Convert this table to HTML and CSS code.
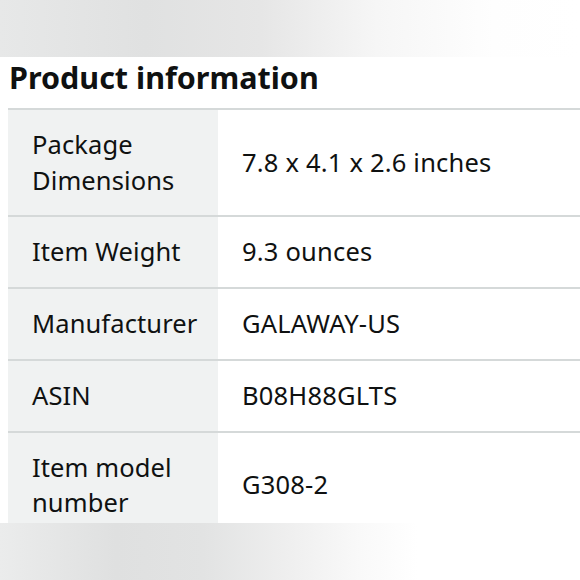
FILE: index.html
```html
<!DOCTYPE html>
<html>
<head>
<meta charset="utf-8">
<link rel="stylesheet" href="styles.css">
</head>
<body>
<div class="top-band"></div>
<h2 class="heading">Product information</h2>
<div class="specs">
  <div class="row"><div class="label">Package Dimensions</div><div class="value">7.8 x 4.1 x 2.6 inches</div></div>
  <div class="row"><div class="label">Item Weight</div><div class="value">9.3 ounces</div></div>
  <div class="row"><div class="label">Manufacturer</div><div class="value">GALAWAY-US</div></div>
  <div class="row"><div class="label">ASIN</div><div class="value">B08H88GLTS</div></div>
  <div class="row"><div class="label">Item model number</div><div class="value">G308-2</div></div>
</div>
<div class="bottom-band"></div>
</body>
</html>
```

FILE: styles.css
```css
html, body {
  margin: 0;
  padding: 0;
  background: #fff;
  width: 580px;
  height: 580px;
  overflow: hidden;
}
body {
  position: relative;
  font-family: "Noto Sans", "Open Sans", sans-serif;
  color: #0f1111;
}
.top-band {
  height: 57px;
  background: linear-gradient(to right, #e7e8e8 0%, #e0e1e1 25%, #e6e6e6 45%, #f6f6f6 65%, #fefefe 85%, #ffffff 100%);
}
.heading {
  margin: 0 0 11px 0;
  padding-left: 9px;
  font-size: 30.5px;
  line-height: 40px;
  font-weight: 700;
  color: #0f1111;
}
.specs {
  margin-left: 8px;
  border-top: 2px solid #d5d9d9;
}
.row {
  display: flex;
  border-bottom: 2px solid #d5d9d9;
}
.label {
  flex: 0 0 210px;
  width: 210px;
  min-width: 0;
  box-sizing: border-box;
  background: #f0f2f2;
  padding: 17px 0 17px 24px;
  font-size: 25.5px;
  letter-spacing: 0.1px;
  line-height: 35.7px;
  display: flex;
  align-items: center;
}
.value {
  flex: 1;
  padding: 17px 24px;
  font-size: 25.5px;
  letter-spacing: 0.2px;
  line-height: 35.7px;
  display: flex;
  align-items: center;
}
.bottom-band {
  position: absolute;
  left: 0;
  right: 0;
  bottom: 0;
  height: 57px;
  background: linear-gradient(to right, #ebecec 0%, #dfe0e0 20%, #e2e3e3 35%, #efefef 50%, #f9f9f9 62%, #ffffff 72%, #ffffff 100%);
}
```
